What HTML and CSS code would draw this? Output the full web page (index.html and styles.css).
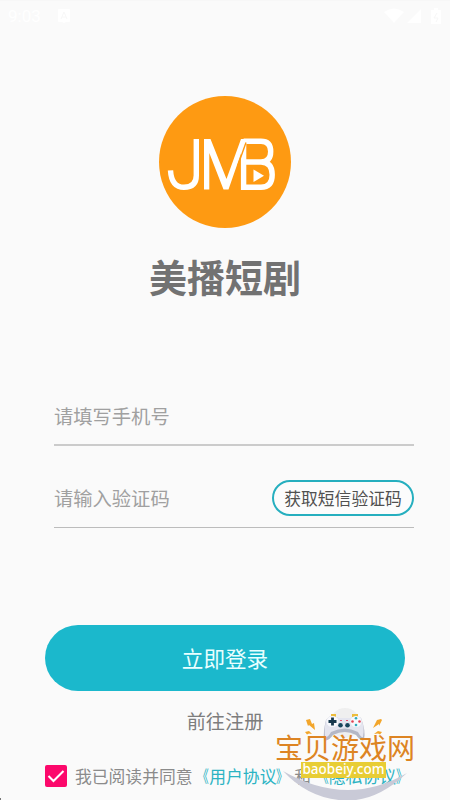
FILE: index.html
```html
<!DOCTYPE html>
<html lang="zh-CN">
<head>
<meta charset="utf-8">
<title>美播短剧</title>
<link rel="stylesheet" href="styles.css">
</head>
<body>
<main class="screen">
  <header class="status">
    <span class="time">9:03</span>
    <svg class="status-app" viewBox="0 0 12 14"><path fill="#fff" d="M1 0h10q1 0 1 1v11q0 1-1 1H8l-2 1-2-1H1q-1 0-1-1V1q0-1 1-1z"/><path d="M3 10 6 3l3 7M4 8h4" fill="none" stroke="#f8f8f8"/></svg>
    <svg class="status-icons" viewBox="0 0 58 16"><path fill="#fff" d="M0 4Q10-3 20 4L10 15zM23 15 37 1v14zM47 2h3V0h4v2h3v14H47z"/><path d="m53 5-3 5h4l-2 4" fill="none" stroke="#f7f7f7"/></svg>
  </header>
  <svg class="logo" viewBox="0 0 132 132">
    <circle cx="66" cy="66" r="66" fill="#fe9a12"/>
    <g fill="none" stroke="#fff" stroke-width="5.400">
      <path d="M37.300 43v36.500q0 11.800-12.300 11.800-12.500 0-13.500-17"/>
      <path d="M84.600 45.200H102q9.700 0 9.700 10.400 0 10.400-9.700 10.400H84.600M102 66q11.200 0 11.200 12.800 0 12.500-11.200 12.500H84.600V45"/>
    </g>
    <path fill="#fff" d="M45 43h6.500L67.500 83 82 43h5L69.500 93.500h-5L50.300 57v36.500H45z"/>
    <path d="M87 46.500 79 69v25" fill="none" stroke="#fe9a12" stroke-width="1.400"/>
    <path fill="#fff" d="m94.500 73.500 10.500 6.300-10.500 6.300z"/>
  </svg>
  <h1 class="title">美播短剧</h1>
  <form class="form">
    <div class="field phone"><span>请填写手机号</span></div>
    <div class="field code"><span>请输入验证码</span><button class="sms" type="button">获取短信验证码</button></div>
    <button class="login" type="button">立即登录</button>
  </form>
  <a class="register">前往注册</a>
  <footer class="agreement">
    <svg class="check" viewBox="0 0 22 22"><rect width="22" height="22" rx="2" fill="#fc086b"/><path d="m3.500 11 5 5L18.500 6" fill="none" stroke="#fff" stroke-width="2.100"/></svg>
    <p>我已阅读并同意<a><span class="open">《</span>用户协议<span class="close">》</span></a><span class="and">和</span><a><span class="open">《</span>隐私协议<span class="close">》</span></a></p>
  </footer>
  <aside class="watermark">
    <svg class="art" viewBox="0 0 150 105">
      <circle cx="75" cy="28" r="15" fill="#efefef"/>
      <path fill="#c9cad7" d="M13 76Q77 113 137 78Q107 106 77 105.500Q40 105 13 76z"/>
      <path fill="#f3a62b" d="m36 25 4-1 2 5 2-1 1 7-6-5-1 1zM111 24l-4 1-4 8 6-4 0 2 3-6zM35 37l4-1 3 3-3-.500-2 1zM112 37l-4-1-4 3 4-.500 2 1z"/>
      <path fill="#edbd3c" d="M61 19h5v3h-5zM82 19h6v3h-6z"/>
      <path fill="#b4b7c6" d="M59 22Q62 20 68 23H81Q87 20 91 23Q96 36 94 45Q91 47 86 40Q75 34 63 40Q58 47 54 45Q53 37 56 25z"/>
      <path fill="#e4e5ef" d="M59 22Q63 20 69 23H80Q86 20 91 23Q95 33 93 42Q91 43 88 37Q75 30 61 37Q58 43 55 42Q54 35 56 25z"/>
      <ellipse cx="62.500" cy="26.500" rx="6" ry="5.500" fill="#f7f8fc"/><circle cx="86" cy="26.500" r="5.500" fill="#f7f8fc"/>
      <path d="M58.500 26.500h8M62.500 22.500v8" stroke="#17384d" stroke-width="2.800"/>
      <circle cx="70.500" cy="30.300" r="2.300" fill="#17465c"/><circle cx="77.500" cy="30.300" r="2.300" fill="#17465c"/>
      <path d="M70 25.500h2M76 25.500h2" stroke="#e65370"/>
      <g fill="#e34152"><circle cx="82.500" cy="26.500" r="1.300"/><circle cx="89.500" cy="26.500" r="1.300"/></g>
      <g fill="#31aabd"><circle cx="86" cy="23.200" r="1.300"/><circle cx="86" cy="30" r="1.300"/></g>
    </svg>
    <div class="site">宝贝游戏网</div>
    <div class="domain">baobeiy.com</div>
  </aside>
  <i class="corner"></i>
</main>
</body>
</html>
```
FILE: styles.css
```css
* { box-sizing: border-box; }
body { margin: 0; font-family: "Noto Sans CJK SC", sans-serif; background: #fafafa; }
.screen { position: relative; display: flex; flex-direction: column; align-items: center; width: 450px; height: 800px; overflow: hidden; background: #fafafa; border-top: 1px solid #f7f7f7; }
.status { width: 100%; height: 31px; display: flex; align-items: center; padding: 0 8px 2px; color: #fff; }
.time { width: 50px; font: 17px/20px Roboto, sans-serif; }
.status-app { width: 12px; height: 14px; }
.status-icons { width: 58px; height: 16px; margin-left: auto; }
.logo { width: 132px; height: 132px; margin-top: 64px; flex: none; }
.title { margin: 20px 0 0; font-size: 38px; line-height: 56px; font-weight: 700; color: #727272; }
.form { width: 360px; margin-top: 80px; }
.field { display: flex; align-items: center; justify-content: space-between; width: 360px; margin-left: 9px; color: #a0a0a0; font-size: 19.3px; line-height: 28px; }
.phone { height: 62px; border-bottom: 2px solid #cbcbcb; padding-top: 3px; }
.code { height: 82px; border-bottom: 1px solid #bcbcbc; padding-top: 22px; }
button { font-family: inherit; padding: 0; }
.sms { width: 142px; height: 36px; border: 2px solid #26afbf; border-radius: 18px; background: #fcfcfc; color: #505050; font-size: 16.8px; line-height: 30px; }
.login { display: block; width: 360px; height: 66px; margin-top: 96.5px; border: 0; border-radius: 33px; background: #1bb8cc; color: #e9ffff; font-size: 21.6px; line-height: 64px; }
.register { margin-top: 16.5px; font-size: 19.2px; line-height: 28px; color: #7d7d7d; }
.agreement { width: 100%; display: flex; align-items: center; padding-left: 45px; margin-top: 28px; height: 26px; }
.check { width: 22px; height: 22px; flex: none; }
.agreement p { margin: 0 0 0 8px; white-space: nowrap; font-size: 16.8px; line-height: 26px; color: #8b8b8b; }
.agreement a { color: #2bb3c3; }
.open, .close { display: inline-block; width: 1em; transform: scaleX(.7); transform-origin: right; }
.close { transform-origin: left; }
.and { margin: 0 1px; }
.watermark { position: absolute; left: 270px; top: 694px; width: 150px; height: 105px; }
.art { position: absolute; inset: 0; width: 150px; height: 105px; }
.site { position: absolute; left: 5px; top: 34px; font-size: 28px; line-height: 36px; white-space: nowrap; color: #dd8423; }
.domain { position: absolute; left: 31px; top: 67px; width: 85px; height: 16px; background: #e8cd35; color: #fff; font: 500 13.5px/14px "Noto Sans", sans-serif; text-align: center; }
.corner { position: absolute; left: 0; bottom: 0; width: 1px; height: 2px; background: #777; }
```
